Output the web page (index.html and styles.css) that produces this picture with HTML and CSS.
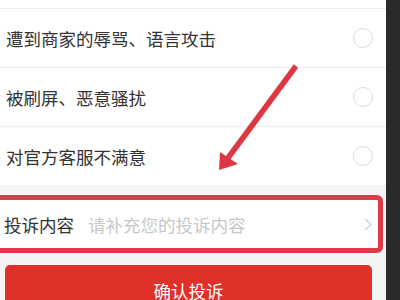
FILE: index.html
```html
<!DOCTYPE html>
<html lang="zh-CN">
<head>
<meta charset="utf-8">
<link rel="stylesheet" href="styles.css">
</head>
<body>
<div class="screen">
  <main class="page">
    <section class="list">
      <div class="row-tail"></div>
      <div class="row"><span>遭到商家的辱骂、语言攻击</span><i class="radio"></i></div>
      <div class="row"><span>被刷屏、恶意骚扰</span><i class="radio"></i></div>
      <div class="row"><span>对官方客服不满意</span><i class="radio"></i></div>
    </section>
    <section class="gray">
      <div class="highlight">
        <div class="field">
          <span class="label">投诉内容</span>
          <span class="placeholder">请补充您的投诉内容</span>
          <svg class="chev" width="8" height="13" viewBox="0 0 8 13"><polyline points="1,1 7,6.5 1,12" fill="none" stroke="#cfcfcf" stroke-width="1.3"/></svg>
        </div>
      </div>
      <button class="submit">确认投诉</button>
    </section>
  </main>
  <aside class="side"></aside>
  <svg class="arrow" width="400" height="300" viewBox="0 0 400 300">
    <line x1="296" y1="66" x2="228" y2="158" stroke="#dc3742" stroke-width="5.5" stroke-linecap="butt"/>
    <polygon points="219,170 220,152 238,164" fill="#dc3742"/>
  </svg>
</div>
</body>
</html>
```
FILE: styles.css
```css
html, body {
  margin: 0;
  padding: 0;
  width: 400px;
  height: 300px;
  overflow: hidden;
  background: #f4f4f4;
  font-family: "Noto Sans CJK SC", "Noto Sans", sans-serif;
}
.screen {
  position: relative;
  display: flex;
  width: 400px;
  height: 300px;
  overflow: hidden;
}
.page {
  width: 386px;
  flex: none;
  background: #f4f4f4;
}
.side {
  flex: 1;
  background: #2a2a2a;
}
.list {
  background: #fff;
}
.row-tail {
  height: 8px;
}
.row {
  display: flex;
  align-items: center;
  justify-content: space-between;
  height: 58px;
  border-top: 1px solid #eeeeee;
  padding: 0 13px 0 6px;
  font-size: 17.5px;
  color: #333;
}
.row span {
  margin-top: 1px;
}
.radio {
  display: block;
  width: 18px;
  height: 18px;
  border: 1.5px solid #dcdcdc;
  border-radius: 50%;
}
.gray {
  padding-top: 10px;
  overflow: hidden;
}
.highlight {
  margin: 0 3px 0 -6px;
  border: 5px solid #dc3a46;
  border-radius: 0 6px 6px 0;
  background: #fff;
}
.field {
  display: flex;
  align-items: center;
  height: 48px;
  padding: 0 6px 0 5px;
  font-size: 17.5px;
}
.label {
  color: #333;
  margin-right: 14px;
}
.placeholder {
  flex: 1;
  color: #c8c8c8;
}
.chev {
  display: block;
}
.submit {
  display: block;
  width: 367px;
  height: 50px;
  margin: 12px 0 0 5px;
  border: none;
  border-radius: 5px;
  background: #e0302a;
  color: #fff;
  font-family: "Noto Sans CJK SC", "Noto Sans", sans-serif;
  font-size: 17.5px;
  padding: 0;
}
.arrow {
  position: absolute;
  left: 0;
  top: 0;
  pointer-events: none;
}
```
